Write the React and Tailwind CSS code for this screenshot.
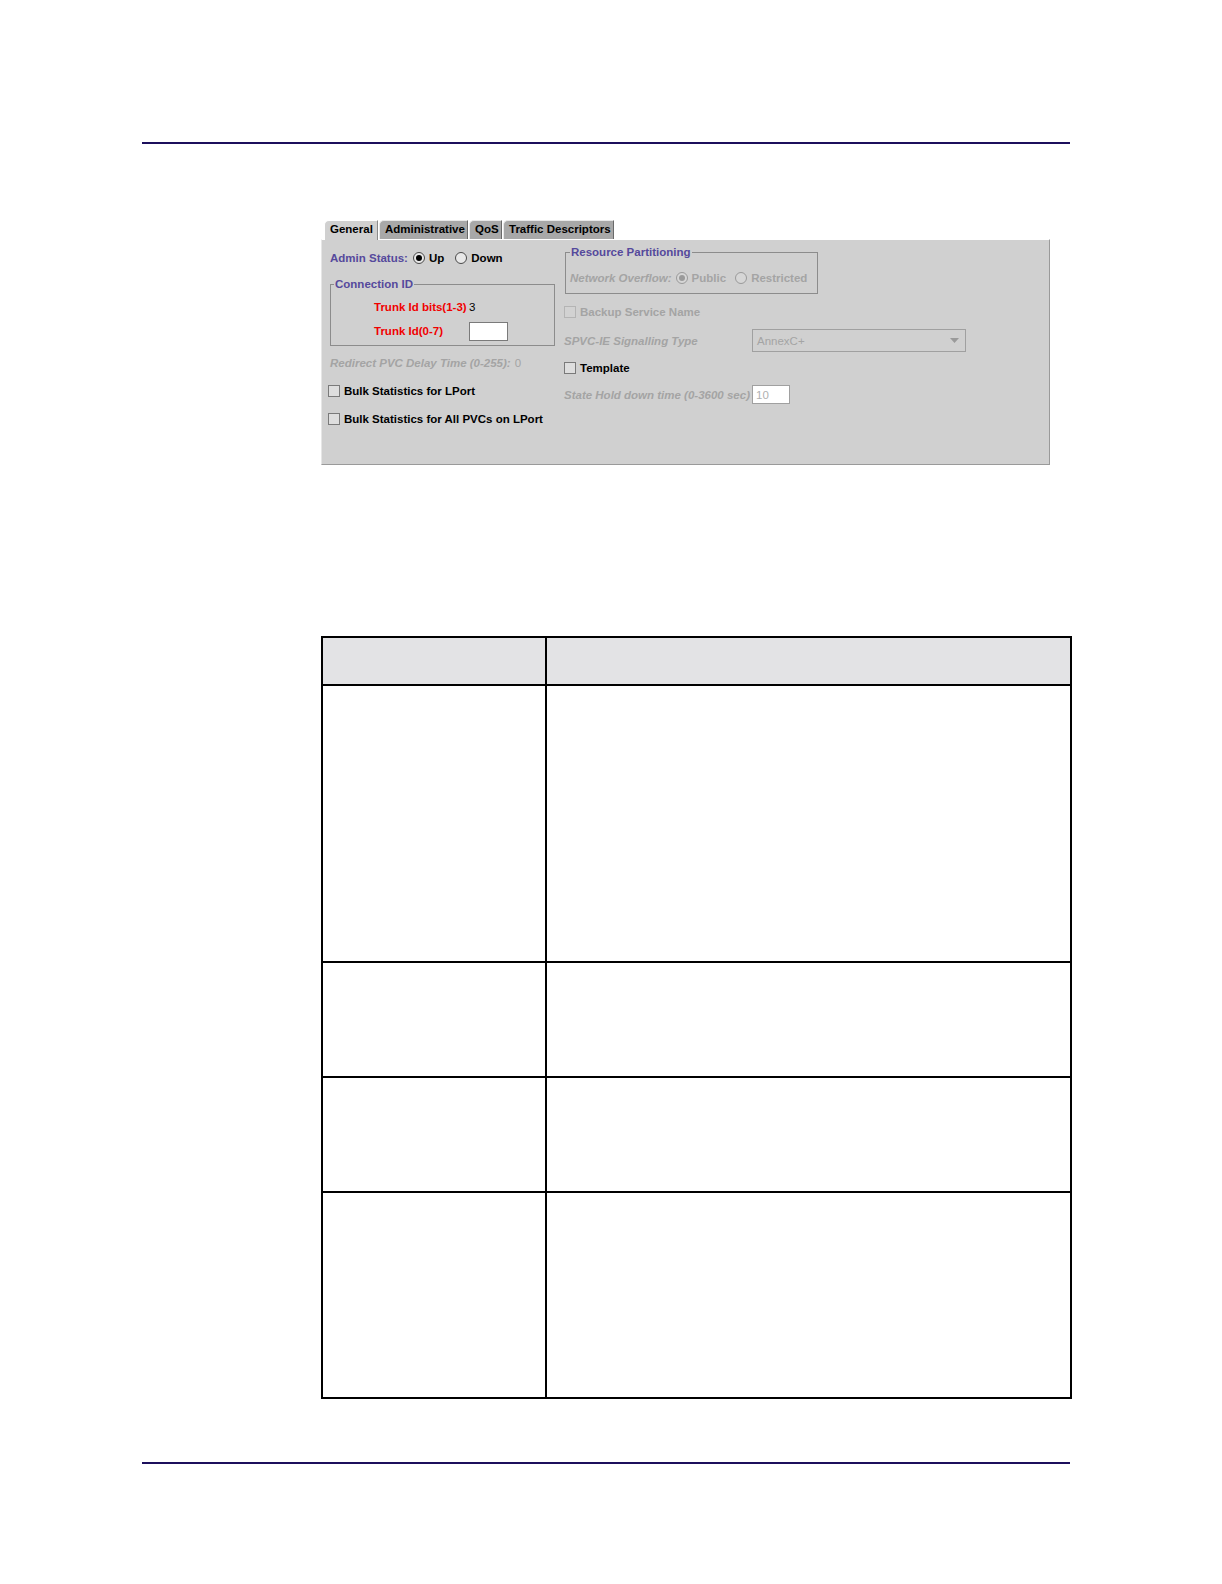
import React from "react";

const F = { fontFamily: '"Liberation Sans", Arial, sans-serif' };

function Radio({ on, disabled, cls = "" }) {
  return (
    <span
      className={`flex shrink-0 items-center justify-center w-[12px] h-[12px] rounded-full border ${cls} ${
        disabled ? "border-[#9a9a9a] bg-[#d6d6d6]" : "border-[#4a4a4a] bg-[#e8e8e8]"
      }`}
    >
      {on && (
        <span
          className={`block w-[6px] h-[6px] rounded-full ${disabled ? "bg-[#9a9a9a]" : "bg-black"}`}
        />
      )}
    </span>
  );
}

function Check({ disabled }) {
  return (
    <span
      className={`block shrink-0 w-[12px] h-[12px] border ${
        disabled ? "border-[#b4b4b4] bg-[#d2d2d2]" : "border-[#7a7a7a] bg-[#dedede]"
      }`}
    />
  );
}

function Tab({ label, w, selected }) {
  return (
    <div
      className={`${w} flex items-center pl-[5px] rounded-tl-[5px] border-t border-l border-r text-[11.5px] font-bold text-black ${
        selected
          ? "h-[20px] pb-[1px] bg-[#d0d0d0] border-t-white border-l-white border-r-[#8a8a8a] -mb-[1px] relative z-10"
          : "h-[19px] bg-[#a8a8a8] border-t-[#e8e8e8] border-l-[#e8e8e8] border-r-[#6a6a6a]"
      }`}
    >
      {label}
    </div>
  );
}

export default function App() {
  return (
    <div className="w-full bg-white overflow-hidden" style={F}>
      <div className="pt-[142px]">
        <div className="ml-[142px] w-[928px] h-[2px] bg-[#1c0f5c]" />
      </div>

      {/* Dialog panel */}
      <div className="mt-[76px] ml-[321px] w-[729px]">
        <div className="flex items-end gap-[1px] pl-[3px] h-[19px]">
          <Tab label="General" w="w-[54px]" selected />
          <Tab label="Administrative" w="w-[89px]" />
          <Tab label="QoS" w="w-[33px]" />
          <Tab label="Traffic Descriptors" w="w-[111px]" />
        </div>
        <div className="h-[226px] bg-[#d0d0d0] border border-t-white border-l-[#e6e6e6] border-r-[#9a9a9a] border-b-[#9a9a9a] flex text-[11.5px] font-bold leading-[16px]">
          {/* Left column */}
          <div className="ml-[7px] w-[226px] flex flex-col">
            <div className="mt-[10px] h-[16px] flex items-center">
              <span className="text-[#55499c] ml-[1px]">Admin Status:</span>
              <Radio on cls="ml-[5px]" />
              <span className="ml-[4px] text-black">Up</span>
              <Radio cls="ml-[11px]" />
              <span className="ml-[4px] text-black">Down</span>
            </div>
            <fieldset className="mt-[10px] ml-[1px] w-[225px] border border-[#8c8c8c] pb-[4px]">
              <legend className="ml-[3px] px-[1px] text-[#55499c] leading-[16px]">Connection ID</legend>
              <div className="mt-[7px] h-[16px] flex items-center pl-[43px]">
                <span className="w-[95px] text-[#f00000]">Trunk Id bits(1-3)</span>
                <span className="font-normal text-black">3</span>
              </div>
              <div className="mt-[6px] h-[20px] flex items-center pl-[43px]">
                <span className="w-[95px] text-[#f00000]">Trunk Id(0-7)</span>
                <span className="block w-[39px] h-[19px] bg-white border border-[#7a7a7a]" />
              </div>
            </fieldset>
            <div className="mt-[9px] h-[16px] flex items-center ml-[1px] italic text-[#a4a4a4]">
              Redirect PVC Delay Time (0-255):<span className="ml-[4px] not-italic font-normal">0</span>
            </div>
            <div className="mt-[12px] h-[16px] flex items-center -ml-[1px]">
              <Check />
              <span className="ml-[4px] text-black">Bulk Statistics for LPort</span>
            </div>
            <div className="mt-[12px] h-[16px] flex items-center -ml-[1px]">
              <Check />
              <span className="ml-[4px] text-black">Bulk Statistics for All PVCs on LPort</span>
            </div>
          </div>

          {/* Right column */}
          <div className="ml-[9px] flex flex-col">
            <fieldset className="mt-[4px] ml-[1px] w-[253px] border border-[#8c8c8c] pb-[7px]">
              <legend className="ml-[4px] px-[1px] text-[#55499c] leading-[16px]">Resource Partitioning</legend>
              <div className="mt-[10px] h-[16px] flex items-center pl-[4px] text-[#a4a4a4]">
                <span className="italic">Network Overflow:</span>
                <Radio on disabled cls="ml-[4px]" />
                <span className="ml-[4px]">Public</span>
                <Radio disabled cls="ml-[9px]" />
                <span className="ml-[4px]">Restricted</span>
              </div>
            </fieldset>
            <div className="mt-[10px] h-[16px] flex items-center">
              <Check disabled />
              <span className="ml-[4px] text-[#a4a4a4]">Backup Service Name</span>
            </div>
            <div className="mt-[9px] h-[23px] flex items-center">
              <span className="w-[188px] italic text-[#a4a4a4]">SPVC-IE Signalling Type</span>
              <span className="w-[214px] h-[23px] border border-[#a0a0a0] bg-[#d0d0d0] flex items-center justify-between pl-[4px] pr-[6px] text-[#a4a4a4] font-normal">
                <span>AnnexC+</span>
                <svg width="9" height="5" viewBox="0 0 9 5"><path d="M0 0h9L4.5 5z" fill="#9a9a9a" /></svg>
              </span>
            </div>
            <div className="mt-[8px] h-[16px] flex items-center">
              <Check />
              <span className="ml-[4px] text-black">Template</span>
            </div>
            <div className="mt-[9px] h-[19px] flex items-center">
              <span className="w-[188px] italic text-[#a4a4a4]">State Hold down time (0-3600 sec)</span>
              <span className="w-[38px] h-[19px] border border-[#a0a0a0] bg-white flex items-center pl-[3px] text-[#b0b0b0] font-normal">10</span>
            </div>
          </div>
        </div>
      </div>

      {/* Table */}
      <div className="mt-[171px] ml-[321px] w-[751px] border-2 border-black">
        <div className="flex h-[46px] bg-[#e3e3e5]">
          <div className="w-[224px] border-r-2 border-black" />
          <div className="flex-1" />
        </div>
        <div className="flex h-[277px] border-t-2 border-black">
          <div className="w-[224px] border-r-2 border-black" />
          <div className="flex-1" />
        </div>
        <div className="flex h-[115px] border-t-2 border-black">
          <div className="w-[224px] border-r-2 border-black" />
          <div className="flex-1" />
        </div>
        <div className="flex h-[115px] border-t-2 border-black">
          <div className="w-[224px] border-r-2 border-black" />
          <div className="flex-1" />
        </div>
        <div className="flex h-[206px] border-t-2 border-black">
          <div className="w-[224px] border-r-2 border-black" />
          <div className="flex-1" />
        </div>
      </div>

      <div className="mt-[63px] ml-[142px] w-[928px] h-[2px] bg-[#1c0f5c]" />
      <div className="h-[120px]" />
    </div>
  );
}
